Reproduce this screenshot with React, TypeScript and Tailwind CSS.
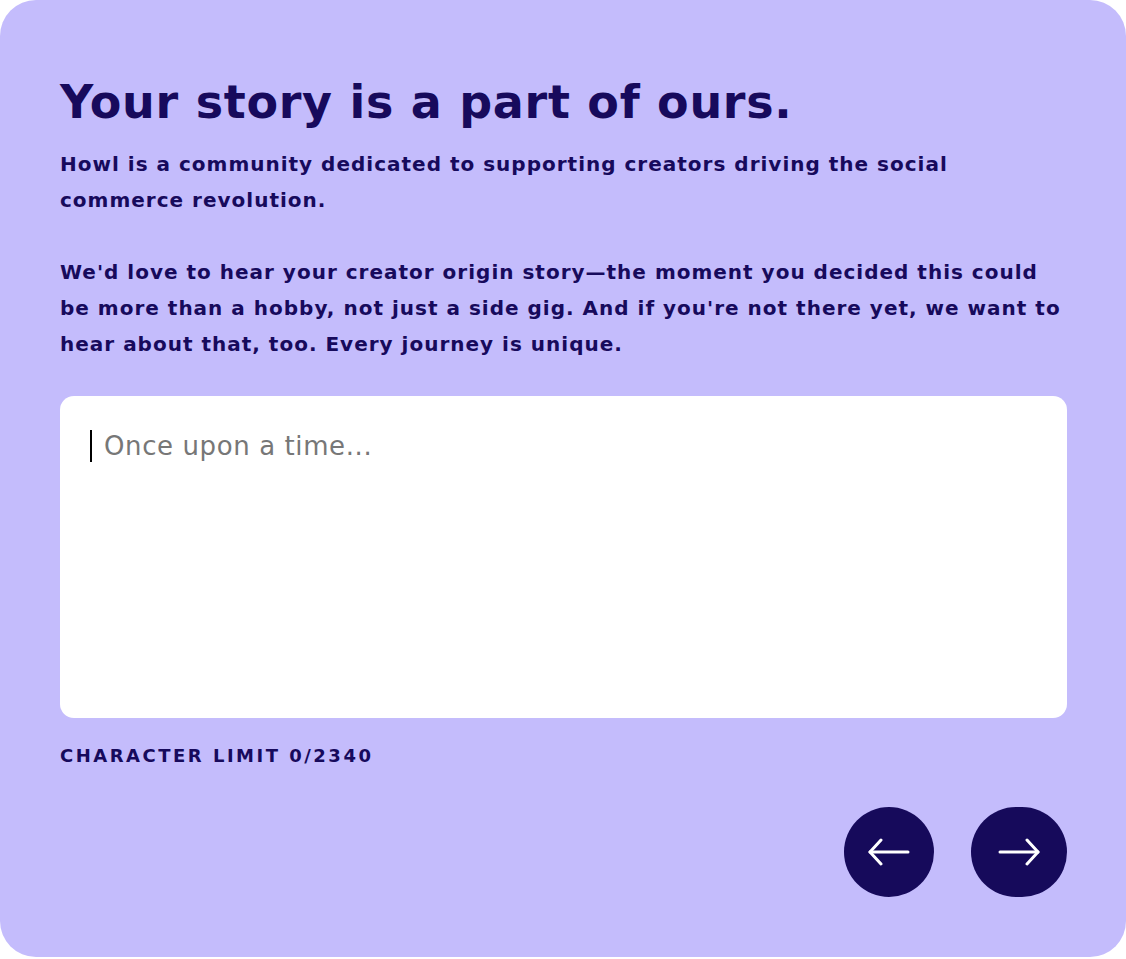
import { useState } from "react";

const MAX_CHARS = 2340;

function ArrowIcon({ dir }: { dir: "left" | "right" }) {
  return (
    <svg
      width="44"
      height="28"
      viewBox="0 0 44 28"
      fill="none"
      stroke="white"
      strokeWidth="3"
      strokeLinecap="round"
      strokeLinejoin="round"
      className={dir === "left" ? "" : "rotate-180"}
    >
      <path d="M41 14H3" />
      <path d="M14 2L3 14l11 12" />
    </svg>
  );
}

export default function App() {
  const [story, setStory] = useState("");

  return (
    <div className="min-h-screen bg-white font-['DejaVu_Sans',sans-serif]">
      <div className="w-[1126px] h-[957px] bg-[#c4bcfc] rounded-[36px] pt-[72px] pl-[60px] pr-[59px] pb-[60px] flex flex-col text-[#170a5c]">
        <h1 className="text-[46px] leading-[60px] font-bold tracking-[0.7px]">
          Your story is a part of ours.
        </h1>
        <div className="mt-[14px] text-[20px] leading-[36px] font-bold tracking-[1px] flex flex-col gap-[36px] whitespace-nowrap">
          <p>
            Howl is a community dedicated to supporting creators driving the social
            <br />
            commerce revolution.
          </p>
          <p>
            We'd love to hear your creator origin story—the moment you decided this could
            <br />
            be more than a hobby, not just a side gig. And if you're not there yet, we want to
            <br />
            hear about that, too. Every journey is unique.
          </p>
        </div>

        <div className="relative mt-[34px]">
          <textarea
            value={story}
            maxLength={MAX_CHARS}
            onChange={(e) => setStory(e.target.value)}
            placeholder="Once upon a time..."
            className="block w-full h-[322px] resize-none rounded-[14px] bg-white pl-[44px] pr-[30px] pt-[30px] text-[26px] leading-[40px] tracking-[0.6px] text-[#170a5c] placeholder:text-[#777] outline-none"
          />
          {story.length === 0 && (
            <span className="absolute left-[30px] top-[34px] w-[2px] h-[32px] bg-black" />
          )}
        </div>

        <div className="mt-[24px] text-[18px] font-bold tracking-[2.5px] uppercase">
          Character limit {story.length}/{MAX_CHARS}
        </div>

        <div className="mt-auto flex justify-end items-center gap-[37px]">
          <button className="w-[90px] h-[90px] rounded-full bg-[#160a5b] flex items-center justify-center">
            <ArrowIcon dir="left" />
          </button>
          <button className="w-[96px] h-[90px] rounded-full bg-[#160a5b] flex items-center justify-center">
            <ArrowIcon dir="right" />
          </button>
        </div>
      </div>
    </div>
  );
}
